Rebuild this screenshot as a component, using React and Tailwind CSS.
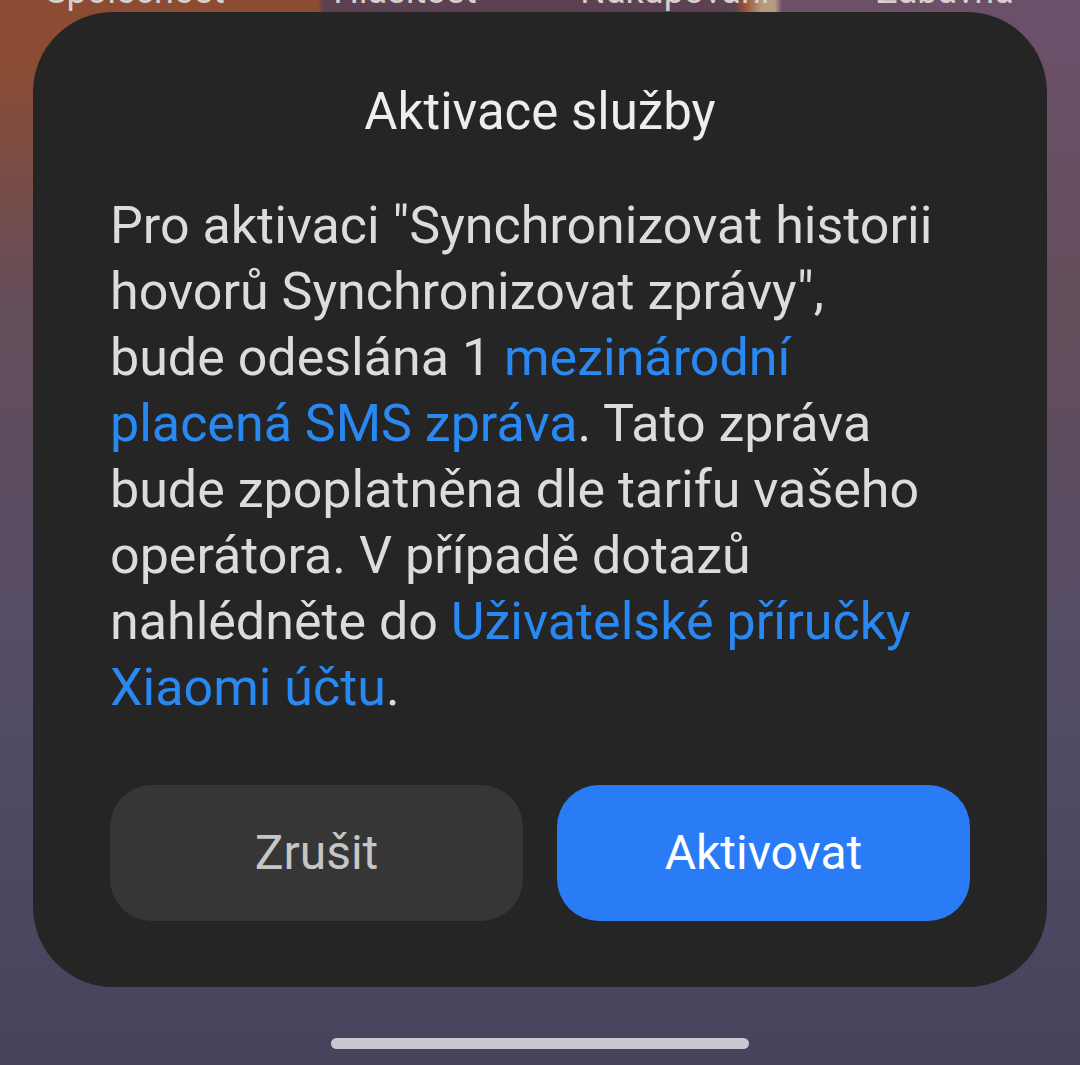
const font = { fontFamily: '"Roboto", "Noto Sans", sans-serif' };

function TopLabels() {
  const labels = ['Společnost', 'Hlasitost', 'Nakupování', 'Zábavná'];
  return (
    <div className="h-[12px] overflow-hidden flex items-end">
      {labels.map((l) => (
        <div key={l} className="flex-1 text-center text-[36px] leading-none mb-[3px] text-[#d8d0cc]">
          {l}
        </div>
      ))}
    </div>
  );
}

function Link({ children }) {
  return <span className="text-[#2a88f2]">{children}</span>;
}

export default function App() {
  return (
    <div
      style={font}
      className="w-[1080px] h-[1065px] overflow-hidden flex flex-col bg-[linear-gradient(180deg,rgba(0,0,0,0)_0px,rgba(0,0,0,0)_60px,#644d5a_300px,#554d68_650px,#45445c_1065px),linear-gradient(90deg,#8b4c33_0px,#8b4c33_318px,#5b4152_324px,#5b4152_735px,#9a5236_745px,#b39c82_762px,#b39c82_775px,#6d5068_782px,#6a5068_1080px)]"
    >
      <TopLabels />

      {/* Dialog */}
      <div className="mx-[33px] bg-[#252525] rounded-[80px] pt-[70px] pb-[66px] px-[77px] flex flex-col">
        <h1 className="text-center text-[51px] leading-[60px] text-[#ededed] font-normal">Aktivace služby</h1>

        <div className="mt-[51px] text-[52px] leading-[66px] text-[#dcdcdc] whitespace-nowrap">
          <div>Pro aktivaci "Synchronizovat historii</div>
          <div>hovorů Synchronizovat zprávy",</div>
          <div>
            bude odeslána 1 <Link>mezinárodní</Link>
          </div>
          <div>
            <Link>placená SMS zpráva</Link>. Tato zpráva
          </div>
          <div>bude zpoplatněna dle tarifu vašeho</div>
          <div>operátora. V případě dotazů</div>
          <div>
            nahlédněte do <Link>Uživatelské příručky</Link>
          </div>
          <div>
            <Link>Xiaomi účtu</Link>.
          </div>
        </div>

        <div className="mt-[64px] flex gap-[34px]">
          <button className="flex-1 h-[136px] rounded-[42px] bg-[#363636] text-[#c6c6c6] text-[48px]">
            Zrušit
          </button>
          <button className="flex-1 h-[136px] rounded-[42px] bg-[#2a7cf6] text-white text-[48px]">
            Aktivovat
          </button>
        </div>
      </div>

      {/* Home indicator */}
      <div className="mt-[51px] flex justify-center">
        <div className="w-[418px] h-[11px] rounded-full bg-[#c9c8d2]" />
      </div>
    </div>
  );
}
